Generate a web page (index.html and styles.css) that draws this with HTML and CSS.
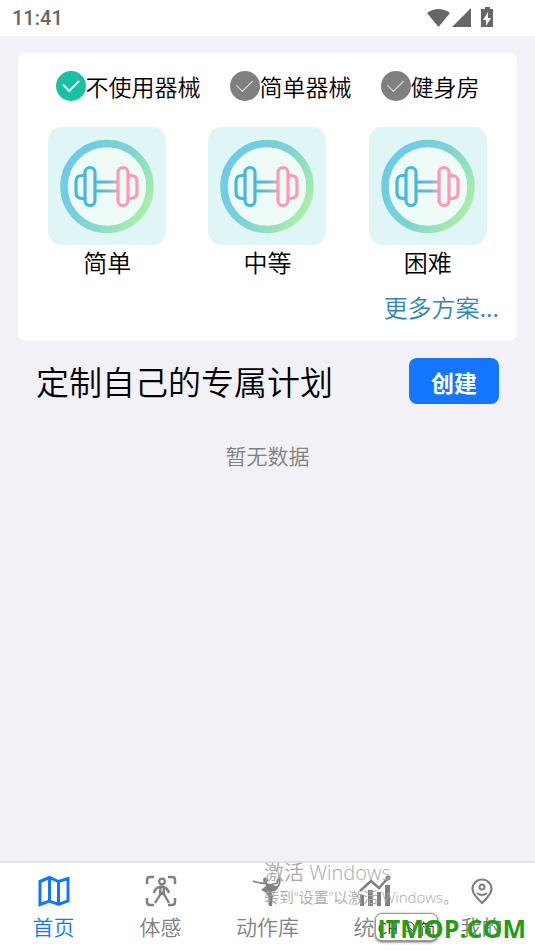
FILE: index.html
```html
<!DOCTYPE html>
<html lang="zh-CN">
<head>
<meta charset="utf-8">
<meta name="viewport" content="width=device-width, initial-scale=1">
<title>健身计划</title>
<link rel="stylesheet" href="styles.css">
</head>
<body>
<svg width="0" height="0" class="defs" aria-hidden="true">
  <defs>
    <linearGradient id="ring" x1="0" y1="0.2" x2="1" y2="0.8">
      <stop offset="0" stop-color="#6cc9ea"/>
      <stop offset="0.5" stop-color="#7ed3d2"/>
      <stop offset="1" stop-color="#b0efa6"/>
    </linearGradient>
    <linearGradient id="bar" x1="0" y1="0" x2="1" y2="0">
      <stop offset="0" stop-color="#45b9dc"/>
      <stop offset="0.55" stop-color="#69b7d6"/>
      <stop offset="1" stop-color="#d5a3c8"/>
    </linearGradient>
    <radialGradient id="tile">
      <stop offset="0" stop-color="#e8f7f5"/>
      <stop offset="1" stop-color="#dff5f6"/>
    </radialGradient>
    <symbol id="dumbbell" viewBox="0 0 118 118">
      <rect width="118" height="118" rx="14" fill="url(#tile)"/>
      <circle cx="59" cy="59.500" r="43" fill="#effbf6" stroke="url(#ring)" stroke-width="7.500"/>
      <path d="M48 54h21v2H48zM48 63h21v2H48z" fill="url(#bar)" stroke="url(#bar)"/>
      <g fill="none" stroke-width="3.200" stroke-linejoin="round">
        <path d="M37 48.500h-3q-6 0-6 6v11q0 6 6 6h3" stroke="#45b9dc"/>
        <rect x="37" y="40.500" width="10" height="38" rx="5" stroke="#45b9dc"/>
        <path d="M80 48.500h3q6 0 6 6v11q0 6-6 6h-3" stroke="#ff98b8"/>
        <rect x="70" y="40.500" width="10" height="38" rx="5" stroke="#ff98b8"/>
      </g>
    </symbol>
  </defs>
</svg>

<header class="status">
  <time>11:41</time>
  <svg width="70" height="22" viewBox="0 0 70 22" fill="#666" aria-hidden="true">
    <path d="M0 6Q11.500-2 23 6L11.500 20Z"/>
    <path d="M44 1v19H25Z"/>
    <path d="M58 0h5v2h3v18H54V2h4z"/>
    <path d="M61 5l-5 8h3v6l5-8h-3z" fill="#fff"/>
  </svg>
</header>

<main>
  <section class="card">
    <form class="options">
      <label><input type="radio" name="equipment" checked>不使用器械</label>
      <label><input type="radio" name="equipment">简单器械</label>
      <label><input type="radio" name="equipment">健身房</label>
    </form>
    <div class="levels">
      <a href="#easy"><svg aria-hidden="true"><use href="#dumbbell"/></svg>简单</a>
      <a href="#medium"><svg aria-hidden="true"><use href="#dumbbell"/></svg>中等</a>
      <a href="#hard"><svg aria-hidden="true"><use href="#dumbbell"/></svg>困难</a>
    </div>
    <a class="more" href="#more">更多方案...</a>
  </section>

  <section class="custom">
    <h1>定制自己的专属计划</h1>
    <button type="button">创建</button>
  </section>
  <p class="empty">暂无数据</p>
</main>

<footer class="bottom">
  <nav class="tabs">
    <a class="active" href="#home">
      <svg viewBox="0 0 32 32" aria-hidden="true"><path d="M2 6.500 11.500 2.500 20.500 6.500 30 3.500V26L20.500 29.500 11.500 26 2 29.500ZM11.500 2.500V26M20.500 6.500V29.500" stroke-width="3"/></svg>
      首页
    </a>
    <a href="#motion">
      <svg viewBox="0 0 32 32" aria-hidden="true"><path d="M2 9V5q0-3 3-3h4M23 2h4q3 0 3 3v4M30 23v4q0 3-3 3h-4M9 30H5q-3 0-3-3v-4" stroke-width="2.500"/><circle cx="17" cy="6.500" r="2.800" stroke-width="2.200"/><path d="M9 18q1-6 8-6.500 5 .500 7 6.500M15.500 12l-.500 8-5 8M18.500 12l.500 7 5 9M14.500 20l2.500-2 2 2" stroke-width="2.300"/></svg>
      体感
    </a>
    <a href="#library">
      <svg viewBox="0 0 32 32" aria-hidden="true"><path d="M1 6q7 3 14 2M17 10l8-2 2-6q2 6-1 9l-6 3" stroke-width="1.800"/><circle cx="13.500" cy="5" r="2.500" fill="currentColor" stroke="none"/><path d="M13 8l6 1 7 3q0 4-7 5l2 4-1 10h-3l0-9-4-5-4-2 5-4z" fill="currentColor" stroke="none"/></svg>
      动作库
    </a>
    <a href="#stats">
      <svg viewBox="0 0 32 32" aria-hidden="true"><path d="M1 20h4v11H1zM9 15h5v16H9zM18 17h4v14h-4zM26 10h5v21h-5z" fill="currentColor" stroke="none"/><path d="M1 16 12 6l8 7 8-9" stroke-width="2.500"/><circle cx="29" cy="3" r="2.500" fill="currentColor" stroke="none"/></svg>
      统计
    </a>
    <a href="#mine">
      <svg viewBox="0 0 32 32" aria-hidden="true"><path d="M16 28Q6.500 19 6.500 14a9.500 9.500 0 0 1 19 0q0 5-9.500 14z" stroke-width="2.200"/><circle cx="16" cy="12" r="2.500" stroke-width="2"/><path d="M11 18q5 4 10 0" stroke-width="2"/></svg>
      我的
    </a>
  </nav>
  <div class="activate"><strong>激活 Windows</strong><span>转到“设置”以激活 Windows。</span></div>
  <div class="ime">CH <svg width="14" height="14" viewBox="0 0 14 14" fill="none" stroke="#444" aria-hidden="true"><circle cx="7" cy="7" r="5"/><path d="M3 3l8 8"/></svg> 简</div>
  <div class="brand">ITMOP.COM</div>
</footer>
</body>
</html>
```

FILE: styles.css
```css
* {
  box-sizing: border-box;
}

body {
  margin: 0;
  min-height: 100vh;
  display: flex;
  flex-direction: column;
  background: #f2f1f7;
  color: #000;
  font-family: "Noto Sans CJK SC", sans-serif;
  font-weight: 350;
}

a {
  color: inherit;
  text-decoration: none;
}

.defs {
  position: absolute;
}

.status {
  display: flex;
  justify-content: space-between;
  align-items: center;
  height: 36px;
  padding: 0 38px 0 12px;
  background: #fff;
  color: #666;
  font: 500 20px/36px Roboto, sans-serif;
}

main {
  flex: 1;
  padding: 17px 18px;
}

.card {
  display: flex;
  flex-direction: column;
  padding: 18px 9px 16px;
  border-radius: 8px;
  background: #fff;
}

.options {
  display: flex;
  justify-content: center;
  gap: 29px;
  font-size: 23px;
  line-height: 30px;
}

.options label {
  display: flex;
  align-items: center;
  white-space: nowrap;
}

.options input {
  appearance: none;
  display: grid;
  place-items: center;
  width: 30px;
  height: 30px;
  margin: 0;
  border-radius: 50%;
  background: #808080;
}

.options input::after {
  content: "";
  width: 8px;
  height: 14px;
  margin-bottom: 6px;
  border: solid #e6e6e6;
  border-width: 0 1px 1px 0;
  transform: rotate(45deg);
}

.options input:checked {
  background: #18c0a4;
}

.options input:checked::after {
  height: 13px;
  border-color: #e4fff8;
  border-width: 0 2px 2px 0;
}

.levels {
  display: grid;
  grid-template-columns: repeat(3, 1fr);
  margin-top: 26px;
  font-size: 24px;
  line-height: 34px;
}

.levels a {
  display: flex;
  flex-direction: column;
  align-items: center;
}

.levels svg {
  width: 118px;
  height: 118px;
}

.more {
  align-self: flex-end;
  margin: 10px 9px 0 0;
  color: #2f86b5;
  font-size: 24px;
  line-height: 36px;
}

.custom {
  display: flex;
  justify-content: space-between;
  align-items: center;
  padding: 17px 18px 0;
}

.custom h1 {
  margin: 0;
  font-size: 33px;
  font-weight: 350;
  line-height: 46px;
}

.custom button {
  width: 90px;
  height: 46px;
  padding: 2px 0 0;
  border: 0;
  border-radius: 8px;
  background: #1476fe;
  color: #fff;
  font: 700 23px/40px "Noto Sans CJK SC", sans-serif;
}

.empty {
  margin: 35px 0 0;
  color: #808080;
  font-size: 21px;
  line-height: 32px;
  text-align: center;
}

.bottom {
  position: relative;
  border-top: 2px solid #e2e2e4;
  background: #fff;
}

.tabs {
  display: grid;
  grid-template-columns: repeat(5, 1fr);
  padding: 12px 0 9px;
  color: #808080;
  font-size: 21px;
  line-height: 32px;
}

.tabs a {
  display: flex;
  flex-direction: column;
  align-items: center;
  gap: 3px;
}

.tabs .active {
  color: #1476fe;
}

.tabs svg {
  width: 32px;
  height: 32px;
  fill: none;
  stroke: currentColor;
}

.activate,
.ime,
.brand {
  position: absolute;
  white-space: nowrap;
  pointer-events: none;
}

.activate {
  top: -3px;
  right: 69px;
  width: 202px;
  color: #aaa;
  font-family: "Open Sans", "Noto Sans CJK SC", sans-serif;
}

.activate strong,
.activate span {
  display: block;
  font-size: 20px;
  font-weight: 350;
  line-height: 26px;
}

.activate span {
  font-size: 15px;
  line-height: 22px;
}

.ime {
  right: 97px;
  bottom: 10px;
  display: flex;
  align-items: center;
  justify-content: center;
  gap: 4px;
  width: 63px;
  height: 28px;
  border: 1px solid #999;
  border-radius: 7px;
  background: #fff;
  box-shadow: 0 1px 3px #555;
  color: #333;
  font-size: 15px;
}

.brand {
  right: 9px;
  bottom: 6px;
  color: #279b18;
  font: 700 25px/34px "Open Sans", sans-serif;
}
```
